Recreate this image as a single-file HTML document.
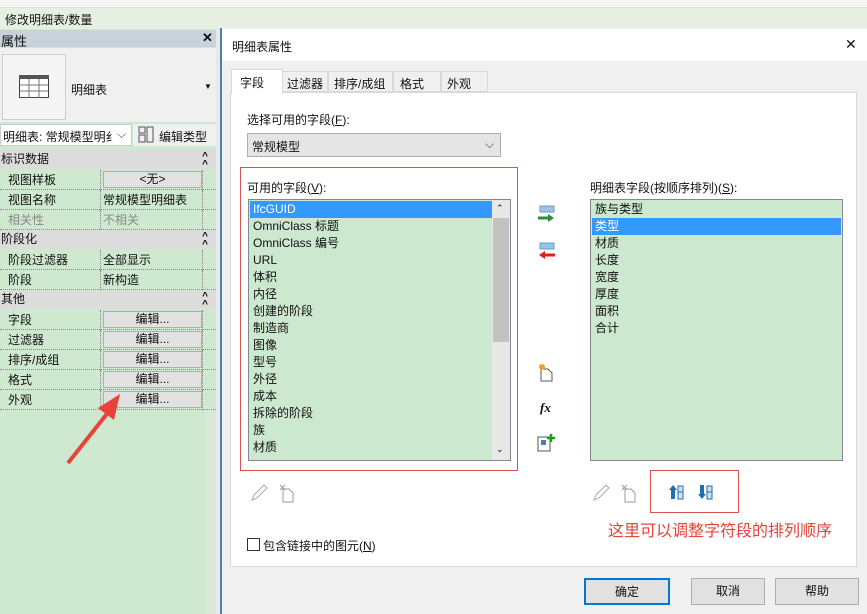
<!DOCTYPE html>
<html><head><meta charset="utf-8"><style>
*{box-sizing:border-box;margin:0;padding:0}
body{width:867px;height:614px;overflow:hidden;position:relative;background:#cfe9d0;font-family:"Liberation Sans","Noto Sans CJK SC",sans-serif;font-size:12px;color:#111}
.a{position:absolute}
.t{position:absolute;white-space:nowrap}
.row{position:absolute;left:0;width:216px;height:20px;border-bottom:1px dotted #888}
.row .l{position:absolute;left:8px;top:1px}
.row .v{position:absolute;left:100px;top:0;width:103px;height:20px;border-left:1px dotted #888;border-right:1px dotted #888}
.btn{position:absolute;left:2px;top:1px;width:99px;height:17px;background:#e1e1e1;border:1px solid #adadad;text-align:center;line-height:15px}
.sec{position:absolute;left:0;width:216px;height:19px;background:#dcdcdc;line-height:19px;padding-left:1px}
.sec b{position:absolute;right:8px;top:0;font-weight:bold;font-size:10px;line-height:8px;padding-top:3px}
.li{height:17px;line-height:17px;padding-left:3px;font-size:12px}
.dbtn{position:absolute;height:27px;background:#e1e1e1;border:1px solid #adadad;text-align:center;line-height:25px}
</style></head><body>
<div class="a" style="left:0;top:0;width:867px;height:8px;background:#f5f5f5;border-bottom:1px solid #ddd"></div>
<div class="a" style="left:0;top:8px;width:867px;height:21px;background:#e7efe1"></div>
<div class="t" style="left:5px;top:11px">修改明细表/数量</div>
<div class="a" style="left:0;top:30px;width:216px;height:17px;background:#c8d2dc"></div>
<div class="t" style="left:1px;top:31px;font-size:13px">属性</div>
<div class="t" style="left:202px;top:30px;font-size:13px;font-weight:bold">✕</div>
<div class="a" style="left:0;top:48px;width:216px;height:74px;background:#f0f0f0"></div>
<div class="a" style="left:2px;top:54px;width:64px;height:66px;background:#f5f5f5;border:1px solid #ccc"></div>
<svg class="a" style="left:19px;top:75px" width="31" height="24"><rect x="0.5" y="0.5" width="29" height="22" fill="#fff" stroke="#444"/><rect x="0" y="0" width="30" height="4" fill="#555"/><path d="M1 10H29M1 16H29M10 4V23M20 4V23" stroke="#777"/></svg>
<div class="t" style="left:71px;top:81px">明细表</div>
<div class="t" style="left:204px;top:82px;font-size:8px">▼</div>
<div class="a" style="left:0;top:124px;width:132px;height:22px;background:#fff;border:1px solid #ccc"></div>
<div class="t" style="left:3px;top:128px">明细表: 常规模型明纟</div>
<div class="t" style="left:117px;top:127px;color:#555">⌵</div>
<div class="a" style="left:133px;top:124px;width:83px;height:22px;background:#f0f0f0"></div>
<svg class="a" style="left:138px;top:126px" width="16" height="17"><rect x="1" y="1" width="6" height="6" fill="none" stroke="#555"/><rect x="1" y="9" width="6" height="7" fill="none" stroke="#555"/><rect x="9" y="1" width="6" height="15" fill="none" stroke="#555"/></svg>
<div class="t" style="left:159px;top:128px">编辑类型</div>
<div class="sec" style="top:150px">标识数据<b>^<br>^</b></div>
<div class="row" style="top:170px"><span class="l">视图样板</span><div class="v"><div class="btn">&lt;无&gt;</div></div></div>
<div class="row" style="top:190px"><span class="l">视图名称</span><div class="v"><span class="t" style="left:2px;top:1px">常规模型明细表</span></div></div>
<div class="row" style="top:210px;color:#888"><span class="l">相关性</span><div class="v"><span class="t" style="left:2px;top:1px">不相关</span></div></div>
<div class="sec" style="top:230px">阶段化<b>^<br>^</b></div>
<div class="row" style="top:250px"><span class="l">阶段过滤器</span><div class="v"><span class="t" style="left:2px;top:1px">全部显示</span></div></div>
<div class="row" style="top:270px"><span class="l">阶段</span><div class="v"><span class="t" style="left:2px;top:1px">新构造</span></div></div>
<div class="sec" style="top:290px">其他<b>^<br>^</b></div>
<div class="row" style="top:310px"><span class="l">字段</span><div class="v"><div class="btn">编辑...</div></div></div>
<div class="row" style="top:330px"><span class="l">过滤器</span><div class="v"><div class="btn">编辑...</div></div></div>
<div class="row" style="top:350px"><span class="l">排序/成组</span><div class="v"><div class="btn">编辑...</div></div></div>
<div class="row" style="top:370px"><span class="l">格式</span><div class="v"><div class="btn">编辑...</div></div></div>
<div class="row" style="top:390px"><span class="l">外观</span><div class="v"><div class="btn">编辑...</div></div></div>
<div class="a" style="left:205px;top:410px;width:11px;height:204px;background:#d8e8d8"></div>
<div class="a" style="left:216px;top:28px;width:6px;height:586px;background:#e8e8e8"></div>
<svg class="a" style="left:60px;top:390px" width="70" height="80"><path d="M8 73L50 20" stroke="#e8423a" stroke-width="4"/><path d="M60 4L38 18L54 30Z" fill="#e8423a"/></svg>
<div class="a" style="left:220px;top:28px;width:647px;height:586px;background:#f0f0f0;border-left:2px solid #4a7fb8"></div>
<div class="a" style="left:222px;top:29px;width:645px;height:32px;background:#fff"></div>
<div class="t" style="left:232px;top:38px;font-size:12px">明细表属性</div>
<div class="t" style="left:845px;top:36px;font-size:14px">✕</div>
<div class="a" style="left:230px;top:92px;width:627px;height:475px;background:#fff;border:1px solid #d9d9d9"></div>
<div class="a" style="left:282px;top:71px;width:46px;height:21px;background:#f0f0f0;border:1px solid #d9d9d9"></div>
<div class="a" style="left:328px;top:71px;width:65px;height:21px;background:#f0f0f0;border:1px solid #d9d9d9"></div>
<div class="a" style="left:393px;top:71px;width:48px;height:21px;background:#f0f0f0;border:1px solid #d9d9d9"></div>
<div class="a" style="left:441px;top:71px;width:47px;height:21px;background:#f0f0f0;border:1px solid #d9d9d9"></div>
<div class="a" style="left:231px;top:69px;width:52px;height:25px;background:#fff;border:1px solid #d9d9d9;border-bottom:none"></div>
<div class="t" style="left:240px;top:74px">字段</div>
<div class="t" style="left:287px;top:75px">过滤器</div>
<div class="t" style="left:334px;top:75px">排序/成组</div>
<div class="t" style="left:400px;top:75px">格式</div>
<div class="t" style="left:447px;top:75px">外观</div>
<div class="t" style="left:247px;top:111px">选择可用的字段(<u>F</u>):</div>
<div class="a" style="left:247px;top:133px;width:254px;height:24px;background:#e5e5e5;border:1px solid #adadad"></div>
<div class="t" style="left:252px;top:138px">常规模型</div>
<div class="t" style="left:485px;top:137px;color:#444">⌵</div>
<div class="a" style="left:240px;top:167px;width:278px;height:304px;border:1px solid #d9534f"></div>
<div class="t" style="left:247px;top:179px">可用的字段(<u>V</u>):</div>
<div class="a" style="left:248px;top:199px;width:263px;height:262px;background:#cce8cf;border:1px solid #828790;padding:1px">
<div class="li" style="background:#3399ff;color:#fff;width:242px">IfcGUID</div>
<div class="li">OmniClass 标题</div><div class="li">OmniClass 编号</div><div class="li">URL</div><div class="li">体积</div><div class="li">内径</div><div class="li">创建的阶段</div><div class="li">制造商</div><div class="li">图像</div><div class="li">型号</div><div class="li">外径</div><div class="li">成本</div><div class="li">拆除的阶段</div><div class="li">族</div><div class="li">材质</div>
</div>
<div class="a" style="left:492px;top:200px;width:18px;height:260px;background:#e8e8e8"></div>
<div class="a" style="left:493px;top:218px;width:16px;height:124px;background:#c2c2c2"></div>
<div class="t" style="left:496px;top:203px;font-size:9px">⌃</div>
<div class="t" style="left:496px;top:444px;font-size:9px">⌄</div>
<svg class="a" style="left:537px;top:205px" width="20" height="18"><rect x="3" y="1" width="14" height="6" fill="#9cc4e8" stroke="#6a9cc8"/><path d="M1 13H13" stroke="#2e8b3a" stroke-width="3"/><path d="M11 9L17 13L11 17Z" fill="#2e8b3a"/></svg>
<svg class="a" style="left:537px;top:242px" width="20" height="18"><rect x="3" y="1" width="14" height="6" fill="#9cc4e8" stroke="#6a9cc8"/><path d="M6 13H18" stroke="#e02020" stroke-width="3"/><path d="M8 9L2 13L8 17Z" fill="#e02020"/></svg>
<svg class="a" style="left:538px;top:364px" width="16" height="18"><path d="M3 5H10L14 9V17H3Z" fill="#fff" stroke="#555"/><circle cx="4" cy="3" r="3" fill="#f0a020"/></svg>
<div class="t" style="left:540px;top:400px;font-family:'Liberation Serif',serif;font-style:italic;font-weight:bold;font-size:13px">fx</div>
<svg class="a" style="left:537px;top:434px" width="18" height="18"><rect x="1" y="3" width="12" height="14" fill="#fff" stroke="#555"/><rect x="4" y="6" width="5" height="5" fill="#4a7fb8"/><path d="M14 0V8M10 4H18" stroke="#1a9a1a" stroke-width="2.5"/></svg>
<div class="t" style="left:590px;top:179px">明细表字段(按顺序排列)(<u>S</u>):</div>
<div class="a" style="left:590px;top:199px;width:253px;height:262px;background:#cce8cf;border:1px solid #828790;padding:1px">
<div class="li">族与类型</div>
<div class="li" style="background:#3399ff;color:#fff">类型</div>
<div class="li">材质</div><div class="li">长度</div><div class="li">宽度</div><div class="li">厚度</div><div class="li">面积</div><div class="li">合计</div>
</div>
<svg class="a" style="left:250px;top:483px" width="50" height="20"><path d="M2 17L4 12L14 2L17 5L7 15Z" fill="none" stroke="#aaa"/><path d="M33 6H39L43 10V19H33Z" fill="#fff" stroke="#999"/><path d="M30 2L35 7M35 2L30 7" stroke="#999"/></svg>
<svg class="a" style="left:592px;top:483px" width="50" height="20"><path d="M2 17L4 12L14 2L17 5L7 15Z" fill="none" stroke="#aaa"/><path d="M33 6H39L43 10V19H33Z" fill="#fff" stroke="#999"/><path d="M30 2L35 7M35 2L30 7" stroke="#999"/></svg>
<div class="a" style="left:650px;top:470px;width:89px;height:43px;border:1px solid #d9534f"></div>
<svg class="a" style="left:668px;top:484px" width="50" height="16"><path d="M5 1L9 6H7V15H3V6H1Z" fill="#1f6fb5"/><rect x="10" y="2" width="5" height="13" fill="#cfe2f3" stroke="#1f6fb5"/><path d="M10 8H15" stroke="#1f6fb5"/><path d="M34 15L38 10H36V1H32V10H30Z" fill="#1f6fb5"/><rect x="39" y="2" width="5" height="13" fill="#cfe2f3" stroke="#1f6fb5"/><path d="M39 8H44" stroke="#1f6fb5"/></svg>
<div class="t" style="left:608px;top:517px;font-size:16px;color:#e8423a">这里可以调整字符段的排列顺序</div>
<div class="a" style="left:247px;top:538px;width:13px;height:13px;border:1px solid #333;background:#fff"></div>
<div class="t" style="left:263px;top:537px">包含链接中的图元(<u>N</u>)</div>
<div class="dbtn" style="left:584px;top:578px;width:86px;border:2px solid #0078d7">确定</div>
<div class="dbtn" style="left:691px;top:578px;width:74px">取消</div>
<div class="dbtn" style="left:775px;top:578px;width:84px">帮助</div>
</body></html>
